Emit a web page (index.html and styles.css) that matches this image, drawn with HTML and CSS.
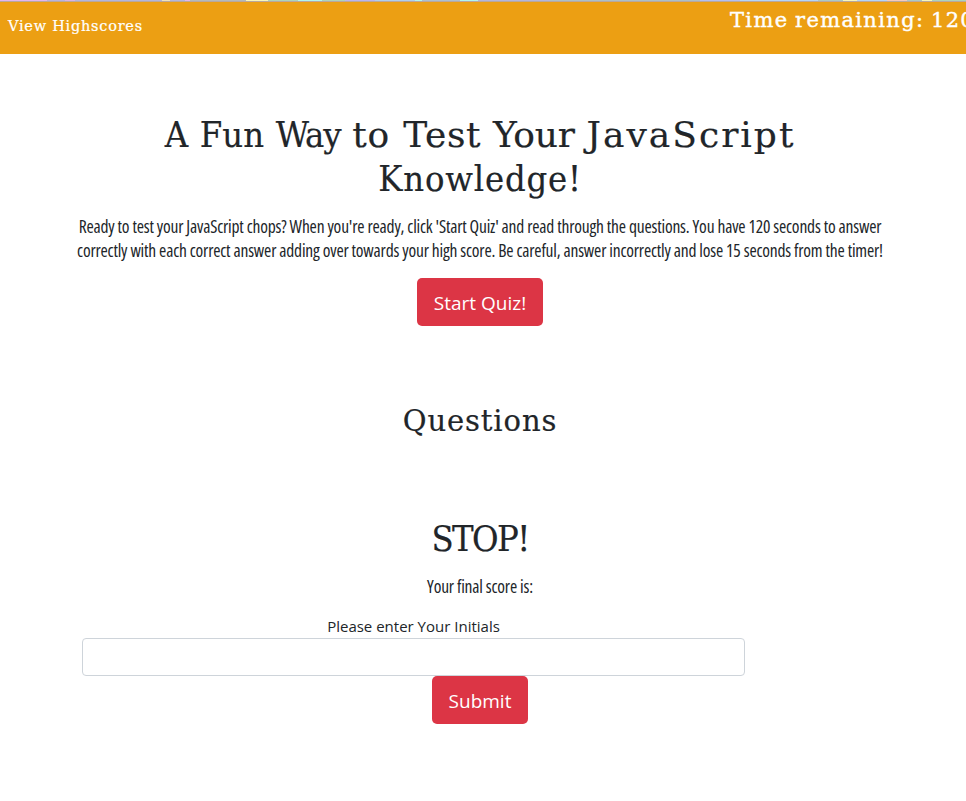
FILE: index.html
```html
<!DOCTYPE html>
<html lang="en">
<head>
<meta charset="utf-8">
<title>JavaScript Quiz</title>
<link rel="stylesheet" href="styles.css">
</head>
<body>
<div class="strip"></div>
<header class="navbar">
  <a class="scores">View Highscores</a>
  <div class="timer">Time remaining: 120</div>
</header>
<main class="page">
  <section class="intro">
    <h1 class="title"><span class="snug">A Fun</span> <span class="tight">Way</span> <span class="loose">to Test</span> <span class="open">Your</span> <span class="wide">JavaScript</span><br><span class="normal">Knowledge!</span></h1>
    <p class="copy">Ready to test your JavaScript chops? When you're ready, click 'Start Quiz' and read through the questions. You have 120 seconds to answer<br>correctly with each correct answer adding over towards your high score. Be careful, answer incorrectly and lose 15 seconds from the timer!</p>
    <button class="btn start">Start Quiz!</button>
  </section>
  <section class="questions"><h2 class="subtitle">Questions</h2></section>
  <section class="finish">
    <h1 class="title stop">STOP!</h1>
    <p class="copy final">Your final score is:</p>
    <form class="entry">
      <label class="label" for="initials">Please enter Your Initials</label>
      <input class="field" id="initials" type="text">
    </form>
    <button class="btn submit">Submit</button>
  </section>
</main>
</body>
</html>
```
FILE: styles.css
```css
* { box-sizing: border-box; }
body {
  margin: 0;
  height: 801px;
  overflow: hidden;
  background: #fff;
  color: #212529;
  font-family: "Open Sans", sans-serif;
}
.strip {
  height: 2px;
  border-bottom: 1px solid #b9a89c;
  background: linear-gradient(90deg, #e3b5ee 0 47px, #b8b3dd 47px 65px, #d9b2e2 65px 75px, #b3b5dc 75px 162px, #f0e2ba 162px 170px, #b4b6dc 170px 185px, #e3b5ee 185px 190px, #b4b9bc 190px 246px, #f8f6bb 246px 268px, #acd3bd 268px 298px, #b0f5f0 298px 322px, #acd3bd 322px 345px, #bab4ee 345px 375px, #b0ceed 375px 415px, #b0f5f0 415px 422px, #acbfd0 422px 460px, #b0f5f0 460px 478px, #b3b5dc 478px 550px, #acbfc8 550px 700px, #b4bff0 700px 740px, #b5d5f8 740px 818px, #acc9c5 818px 843px, #f8f6bb 843px 857px, #b5d5f8 857px 887px, #f5c9bd 887px 907px, #acc9c5 907px 922px, #f8f6bb 922px 932px, #acd3bd 932px);
}
.navbar {
  display: flex;
  justify-content: space-between;
  height: 52px;
  padding-left: 8px;
  background: #ec9f13;
  color: #fff;
  font-family: "DejaVu Serif", serif;
  white-space: nowrap;
}
.scores {
  font-size: 14.5px;
  line-height: 48px;
  letter-spacing: 0.75px;
  -webkit-text-stroke: 0.2px #fff;
}
.timer {
  flex: none;
  width: 236px;
  font-size: 21px;
  line-height: 37px;
  letter-spacing: 1.35px;
  word-spacing: -1.5px;
  -webkit-text-stroke: 0.4px #fff;
}
.page { width: 960px; padding-top: 59px; text-align: center; }
.title, .subtitle {
  margin: 0;
  font-family: "DejaVu Serif Condensed", "DejaVu Serif", serif;
  font-stretch: 75%;
  font-weight: 400;
  white-space: nowrap;
  -webkit-text-stroke: 0.2px #212529;
}
.title { font-size: 36px; line-height: 44px; word-spacing: 1.5px; height: 88px; }
.snug { letter-spacing: 0; }
.tight { letter-spacing: -1px; }
.loose, .open, .wide, .subtitle { font-family: "DejaVu Serif", serif; font-stretch: 100%; }
.loose { letter-spacing: 0.6px; }
.open { letter-spacing: -0.2px; }
.wide { letter-spacing: 2px; }
.normal { letter-spacing: 0.8px; }
.title.stop { height: 44px; letter-spacing: -1.6px; }
.copy {
  margin: 13px 0 16px;
  font-family: "Open Sans", sans-serif;
  font-stretch: 75%;
  font-size: 17.5px;
  letter-spacing: -0.18px;
  line-height: 24px;
  white-space: nowrap;
}
.btn {
  display: block;
  height: 48px;
  margin: 0 auto;
  padding: 0;
  border: 0;
  border-radius: 5px;
  background: #dc3545;
  color: #fff;
  font-family: "Open Sans", sans-serif;
  font-size: 19px;
  line-height: 50px;
}
.start { width: 126px; }
.submit { width: 96px; }
.questions { padding-top: 76px; }
.subtitle { font-size: 29px; line-height: 38px; letter-spacing: 0.9px; }
.finish { padding-top: 77px; }
.final { margin: 13px 0 16px; }
.entry { width: 663px; margin-left: 82px; }
.label { display: block; height: 24px; font-size: 15px; line-height: 24px; }
.field {
  display: block;
  width: 663px;
  height: 38px;
  border: 1px solid #ced4da;
  border-radius: 4px;
  background: #fff;
}
```
